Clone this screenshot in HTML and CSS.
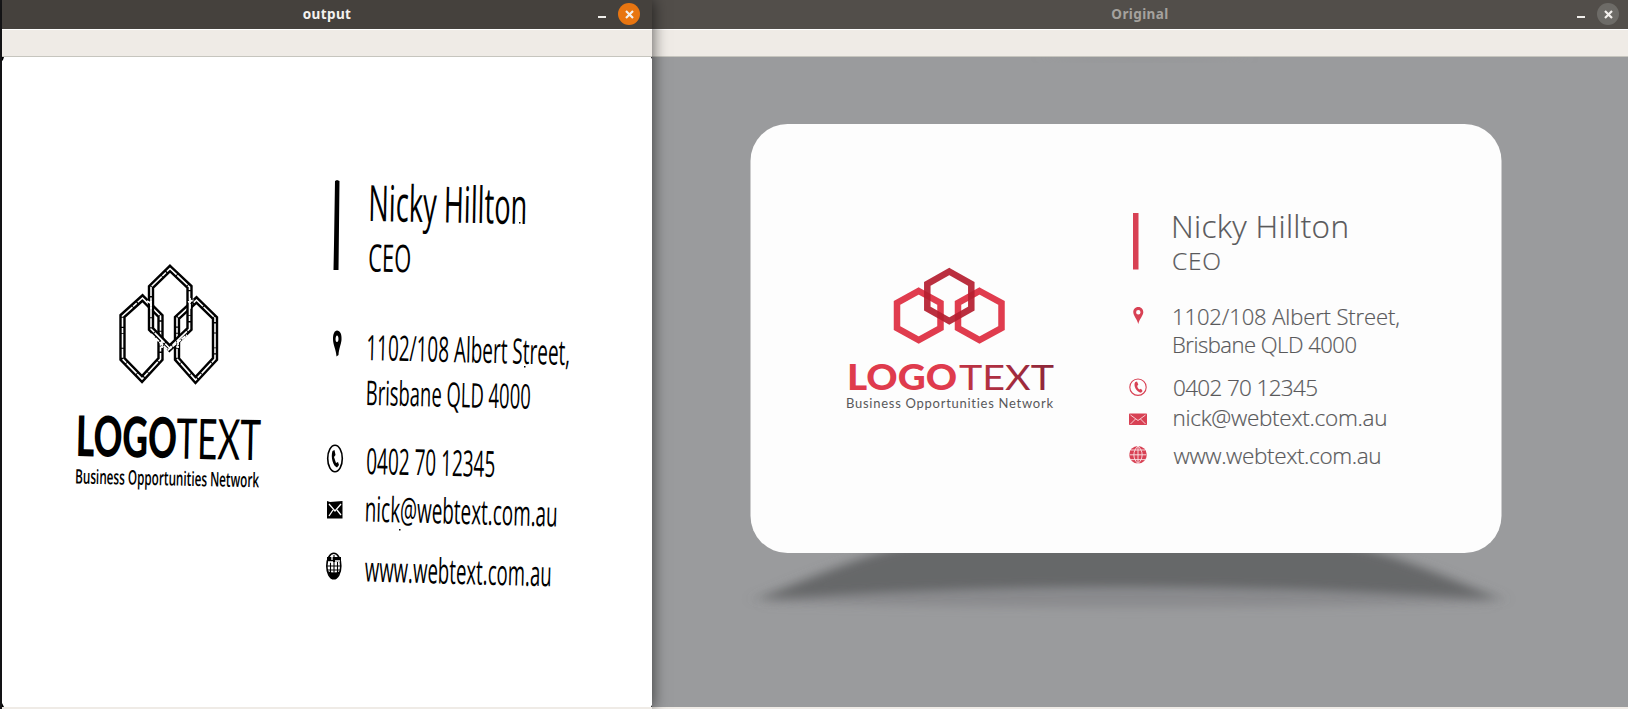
FILE: index.html
```html
<!DOCTYPE html>
<html lang="en">
<head>
<meta charset="utf-8">
<title>output</title>
<link rel="stylesheet" href="styles.css">
</head>
<body>
<main class="desktop">
  <section class="window window-output">
    <header class="titlebar">
      <h1 class="title title-output">output</h1>
      <div class="controls">
        <span class="minimize"></span>
        <span class="close"><svg width="9" height="9" viewBox="0 0 9 9"><path d="M1 1L8 8M8 1L1 8"/></svg></span>
      </div>
    </header>
    <div class="toolbar"></div>
    <svg class="canvas" viewBox="2 57 650 650" width="650" height="650">
      <path d="M2 57h2l-1 3-1 1zM652 57h-1l1 2zM2 707v-4l2 4zM652 707v-2l-1 2z"/>
      <g class="scan-hex">
        <path d="M142.500 298L160.500 316V359L142 379L122.500 359V316Z"/>
        <path d="M196.500 300L215 318V359L195.500 380L177 359V318Z"/>
      </g>
      <g class="scan-gap">
        <path d="M142.500 298L160.500 316V359L142 379L122.500 359V316Z"/>
        <path d="M196.500 300L215 318V359L195.500 380L177 359V318Z"/>
      </g>
      <path class="scan-hex" d="M170 268.500L189.500 287V329L169.500 348L151 329V287Z"/>
      <path class="scan-gap" d="M170 268.500L189.500 287V329L169.500 348L151 329V287Z"/>
      <path class="scan-join" d="M147 301L152 304M151 301V309M188 302L194 300M190 298V309M151 334L168 350L187 335M162 340V348M178 340V348"/>
      <g class="scan-text">
        <text class="logo-bold" transform="translate(75.500 456) rotate(1.2)" font-size="56" textLength="101" lengthAdjust="spacingAndGlyphs">LOGO</text>
        <text class="logo-thin" transform="translate(176 458.500) rotate(1.2)" font-size="56" textLength="84.500" lengthAdjust="spacingAndGlyphs">TEXT</text>
        <text class="scan-tag" transform="translate(75 483.500) rotate(1.2)" font-size="20" textLength="184" lengthAdjust="spacingAndGlyphs">Business Opportunities Network</text>
        <text transform="translate(368 221) rotate(1.1)" font-size="50" textLength="159" lengthAdjust="spacingAndGlyphs">Nicky Hillton</text>
        <text transform="translate(368 271.500) rotate(1)" font-size="38" textLength="43" lengthAdjust="spacingAndGlyphs">CEO</text>
        <text transform="translate(366 360) rotate(1.4)" font-size="35" textLength="204" lengthAdjust="spacingAndGlyphs">1102/108 Albert Street,</text>
        <text transform="translate(365.500 405) rotate(1.3)" font-size="34" textLength="165" lengthAdjust="spacingAndGlyphs">Brisbane QLD 4000</text>
        <text transform="translate(366 474) rotate(1.3)" font-size="36" textLength="129" lengthAdjust="spacingAndGlyphs">0402 70 12345</text>
        <text transform="translate(364.500 521.500) rotate(1.5)" font-size="35" textLength="193" lengthAdjust="spacingAndGlyphs">nick@webtext.com.au</text>
        <text transform="translate(364.500 581.500) rotate(1.5)" font-size="35" textLength="187" lengthAdjust="spacingAndGlyphs">www.webtext.com.au</text>
      </g>
      <path d="M335 181L337 180L339.500 181L338.500 270H333.500L334 244Z"/>
      <path fill-rule="evenodd" d="M337 330.500C340 330.500 342 334 341.500 340C341 345 339 348 338.500 355L336.500 356.500C336 349 333 345 333 339C333 334 334.500 330.500 337 330.500ZM337 335.500C335.500 335.500 334.800 342 337 342S338.800 335.500 337 335.500Z"/>
      <ellipse class="scan-ring" cx="335" cy="458.500" rx="7.300" ry="13.200"/>
      <path d="M332.500 451L334.500 450L335.500 455L334 457L336 463L338 462L339 465L337 467.500C333 466 330.500 457 332.500 451Z"/>
      <path d="M327 501L330 502L342.500 501V518.500H327Z"/>
      <path class="scan-cut" d="M329 504L335 511L341 504M329 516L333 510M341 515L337 510"/>
      <ellipse class="scan-ring" cx="333.800" cy="566" rx="7" ry="12.800"/>
      <path d="M327 557H341V562H327ZM327.500 571Q334 574 340.500 571L336 579H331Z"/>
      <path class="scan-wire" d="M327 566H341M327 570H341M330.500 557V574M334 555V579M337.500 557V574"/>
      <path class="scan-cut" d="M328 562H333M335 561H340M332 557V560"/>
      <path d="M524 366h1.500v1.500H524zM399 529h1.500v1.500H399zM519 222h1.500v1.500H519z"/>
    </svg>
  </section>

  <section class="window window-original">
    <header class="titlebar">
      <h1 class="title title-original">Original</h1>
      <div class="controls">
        <span class="minimize"></span>
        <span class="close"><svg width="9" height="9" viewBox="0 0 9 9"><path d="M1 1L8 8M8 1L1 8"/></svg></span>
      </div>
    </header>
    <div class="toolbar"></div>
    <svg class="canvas" viewBox="652 57 976 650" width="976" height="650">
      <defs>
        <linearGradient id="word" x1="0" x2="1"><stop offset="0" stop-color="#c23445"/><stop offset="1" stop-color="#8c2638"/></linearGradient>
        <filter id="soft" x="-10%" y="-60%" width="120%" height="220%"><feGaussianBlur stdDeviation="8 5"/></filter>
      </defs>
      <path class="top-shade" d="M1040 57Q1140 64 1250 57Z" filter="url(#soft)"/>
      <path class="shade-wide" filter="url(#soft)" d="M765 603C870 565 900 550 970 548H1290C1370 550 1430 580 1492 603Q1128 612 765 603Z"/>
      <path class="shade-core" filter="url(#soft)" d="M755 600C830 571 880 545 950 540H1300C1380 545 1430 571 1502 600Q1128 573 755 600Z"/>
      <rect class="card" x="750.500" y="124" width="751" height="429" rx="37"/>
      <g class="hex-side">
        <path d="M918.700 291L940.500 303V328L918.700 340L897 328V303Z"/>
        <path d="M979.500 291L1001.500 303V328L979.500 340L958 328V303Z"/>
      </g>
      <path class="hex-top" d="M949.300 271.500L971.300 284V308.500L949.300 321L927.300 308.500V284Z"/>
      <text class="logo-bold logo-red" x="847" y="390" font-size="35.500" textLength="110" lengthAdjust="spacingAndGlyphs">LOGO</text>
      <text class="logo-thin" fill="url(#word)" x="959" y="390.300" font-size="35.500" textLength="95" lengthAdjust="spacingAndGlyphs">TEXT</text>
      <text class="tagline" x="846" y="408" font-size="13" textLength="207">Business Opportunities Network</text>
      <rect class="accent" x="1133" y="213" width="5.500" height="56.500"/>
      <g class="card-text">
        <text x="1171" y="237.500" font-size="31.500" textLength="178">Nicky Hillton</text>
        <text x="1172" y="269.500" font-size="24.500" textLength="49">CEO</text>
        <text x="1172" y="324.500" font-size="22" textLength="228">1102/108 Albert Street,</text>
        <text x="1172" y="353.300" font-size="22" textLength="185">Brisbane QLD 4000</text>
        <text x="1173" y="396" font-size="22.500" textLength="145">0402 70 12345</text>
        <text x="1172.500" y="426.300" font-size="22.500" textLength="215">nick@webtext.com.au</text>
        <text x="1173.500" y="464" font-size="22.500" textLength="208">www.webtext.com.au</text>
      </g>
      <path class="accent" fill-rule="evenodd" d="M1138.300 307C1141.500 307 1143.500 309.500 1143.300 312.500C1143 316 1139.500 319 1138.300 324C1137 319 1133.500 316 1133.300 312.500C1133 309.500 1135 307 1138.300 307ZM1138.300 310A2.200 2.200 0 1 0 1138.300 314.400A2.200 2.200 0 1 0 1138.300 310Z"/>
      <circle class="ring" cx="1138" cy="387.200" r="8.200"/>
      <path class="accent" d="M1135.300 382L1137 381.600L1138.300 384.500L1137.200 386C1137.500 387.800 1138.500 389 1139.500 389.500L1141 388.700L1142.600 391L1141 392.700C1136.500 392.500 1132.800 385 1135.300 382Z"/>
      <rect class="accent" x="1129" y="413.500" width="18" height="11.500" rx=".8"/>
      <path class="mail-line" d="M1130.500 415L1138 420.500L1145.500 415M1130.500 424L1135.500 419M1145.500 424L1140.500 419"/>
      <circle class="accent" cx="1138" cy="454.800" r="8.800"/>
      <path class="globe-line" d="M1129.500 454.800H1146.500M1131 450H1145M1131 459.600H1145M1138 446V463.600M1138 446C1132.500 451 1132.500 458.600 1138 463.600C1143.500 458.600 1143.500 451 1138 446"/>
    </svg>
  </section>
</main>
</body>
</html>
```
FILE: styles.css
```css
body {
  margin: 0;
  background: #19191b;
  overflow: hidden;
}
.desktop {
  display: flex;
  width: 1628px;
  height: 709px;
  padding-left: 2px;
  box-sizing: border-box;
}
.window {
  display: flex;
  flex-direction: column;
  flex: none;
  height: 709px;
  background: #efebe6;
}
.window-output {
  position: relative;
  z-index: 1;
  width: 650px;
  box-shadow: 1px 0 14px rgba(0, 0, 0, .6);
}
.window-original { width: 976px; }
.titlebar {
  display: grid;
  grid-template-columns: 1fr auto 1fr;
  align-items: center;
  height: 29px;
  background: #45413d;
  color: #f4f2ef;
}
.window-original .titlebar {
  background: #524e4a;
  color: #a5a29e;
}
.title {
  grid-column: 2;
  margin: 0 0 2px;
  font: 700 13.5px/18px "Noto Sans", "Open Sans", sans-serif;
  letter-spacing: .4px;
}
.controls {
  display: flex;
  justify-content: flex-end;
  align-items: center;
  gap: 12px;
  padding: 0 12px 1px 0;
}
.window-original .controls { padding-right: 9px; }
.minimize {
  width: 8px;
  height: 2px;
  margin-top: 6px;
  background: #f0eeeb;
}
.close {
  display: flex;
  align-items: center;
  justify-content: center;
  width: 22px;
  height: 22px;
  border-radius: 50%;
  background: #e87511;
}
.window-original .close { background: #6d6b67; }
.close path { stroke: #f3f0ed; stroke-width: 2.2; }
.toolbar {
  height: 28px;
  box-sizing: border-box;
  border-top: 1px solid #fff;
  border-bottom: 1px solid #c6c5be;
  background: #efebe6;
}
.canvas { display: block; }
.window-output .canvas { background: #fff; }
.window-original .canvas { background: #9a9b9d; }

.scan-hex { fill: none; stroke: #000; stroke-width: 6.4; }
.scan-gap { fill: none; stroke: #fff; stroke-width: 1.6; stroke-dasharray: 9 1 14 .8 5 1.4; }
.scan-join { fill: none; stroke: #fff; stroke-width: 1.8; stroke-dasharray: 5 .8; }
.scan-text { font-family: "Open Sans", "Noto Sans", sans-serif; fill: #000; }
.scan-tag { font-weight: 600; }
.scan-ring { fill: none; stroke: #000; stroke-width: 1.6; }
.scan-wire { fill: none; stroke: #000; stroke-width: 1.1; }
.scan-cut { fill: none; stroke: #fff; stroke-width: 1.3; }

.logo-bold { font-family: Lato, sans-serif; font-weight: 900; }
.logo-thin { font-family: Lato, sans-serif; font-weight: 400; }
.logo-red { fill: #df3b4d; }
.card { fill: #fdfdfd; }
.top-shade { fill: #929395; }
.shade-wide { fill: #808183; fill-opacity: .6; }
.shade-core { fill: #666769; }
.hex-side { fill: none; stroke: #e03c4e; stroke-width: 6.5; }
.hex-top { fill: none; stroke: #b51f30; stroke-width: 6.5; stroke-opacity: .93; }
.tagline {
  font-family: Lato, sans-serif;
  font-variant-ligatures: none;
  fill: #58585a;
}
.card-text {
  font-family: "Open Sans", "Noto Sans", sans-serif;
  font-weight: 300;
  fill: #59595b;
  stroke: #59595b;
  stroke-width: .2;
}
.accent { fill: #d84154; }
.ring { fill: none; stroke: #d84154; stroke-width: 1.1; }
.mail-line { fill: none; stroke: #fbdde0; stroke-width: .9; }
.globe-line { fill: none; stroke: #fbe4e6; stroke-width: .9; }
```
